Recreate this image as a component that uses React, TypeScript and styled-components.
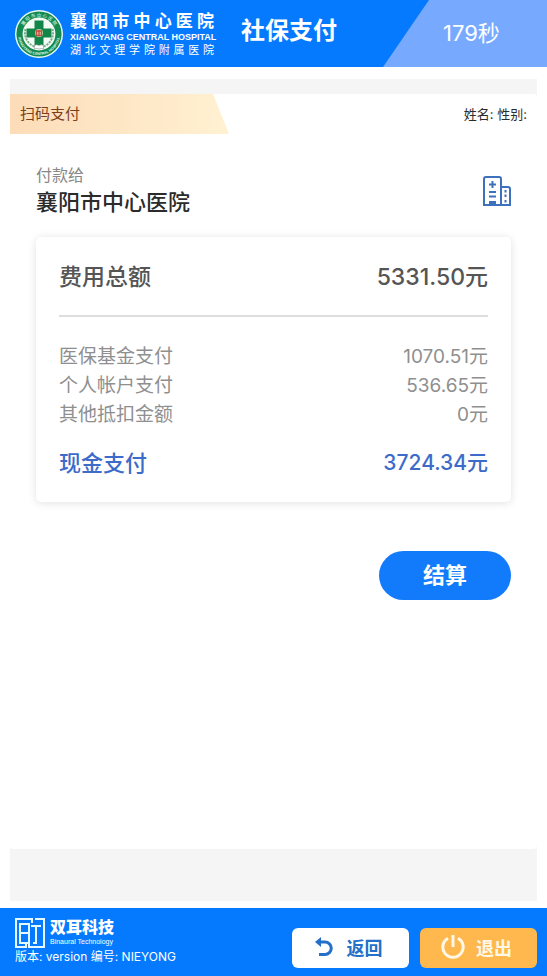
import React from 'react';
import styled, { createGlobalStyle } from 'styled-components';

const GlobalStyle = createGlobalStyle`
  *, *::before, *::after { box-sizing: border-box; }
  body {
    margin: 0;
    background: #fff;
    color: #2b2b2b;
    font-family: Inter, "Noto Sans CJK SC", sans-serif;
  }
  button { font-family: inherit; cursor: pointer; }
  h1, h2, p, dl, dd, dt { margin: 0; }
`;

const Page = styled.div`
  display: flex;
  flex-direction: column;
  min-height: 100vh;
`;

const Header = styled.header`
  display: flex;
  align-items: stretch;
  height: 67px;
  background: #057aff;
  color: #fff;
`;

const Brand = styled.div`
  display: flex;
  align-items: center;
  gap: 6px;
  padding-left: 14px;
`;

const BrandNames = styled.div`
  display: flex;
  flex-direction: column;
  width: 144px;
  padding-top: 2px;
  white-space: nowrap;
`;

const BrandLine = styled.span<{ $size: number; $line: number; $weight: number }>`
  font-size: ${(p) => p.$size}px;
  line-height: ${(p) => p.$line}px;
  font-weight: ${(p) => p.$weight};
  text-align: justify;
  text-align-last: justify;
`;

const BrandLatin = styled.span`
  font: 700 9px/12px "Liberation Sans", sans-serif;
`;

const Title = styled.h1`
  flex: 1;
  padding-left: 27px;
  font-size: 24px;
  line-height: 62px;
  font-weight: 700;
  white-space: nowrap;
`;

const Countdown = styled.div`
  width: 164px;
  padding-left: 60px;
  background: #77aaff;
  clip-path: polygon(46px 0, 100% 0, 100% 100%, 0 100%);
  font-size: 22px;
  line-height: 66px;
`;

const Main = styled.main`
  flex: 1;
  display: flex;
  flex-direction: column;
  margin: 12px 10px 7px;
  padding: 15px 0 52px;
  background: #f5f5f5;
`;

const Sheet = styled.section`
  flex: 1;
  display: flex;
  flex-direction: column;
  border-radius: 4px;
  background: #fff;
`;

const SheetTop = styled.div`
  display: flex;
  justify-content: space-between;
  height: 40px;
  padding-right: 10px;
  font-size: 13px;
  line-height: 40px;
`;

const Ribbon = styled.h2`
  width: 219px;
  padding-left: 10px;
  background: linear-gradient(90deg, #fddcb8, #fff1d2);
  clip-path: polygon(0 0, 203px 0, 100% 100%, 0 100%);
  color: #7c3f1c;
  font-size: 15px;
  line-height: 40px;
  font-weight: 400;
`;

const Content = styled.div`
  display: flex;
  flex-direction: column;
  padding: 29px 26px;
`;

const Payee = styled.div`
  display: flex;
  align-items: center;
  justify-content: space-between;
  margin-bottom: 19px;
`;

const PayeeLabel = styled.p`
  color: #888;
  font-size: 16px;
  line-height: 24px;
`;

const PayeeName = styled.p`
  font-size: 22px;
  line-height: 31px;
  font-weight: 500;
`;

const Card = styled.dl`
  padding: 17px 23px 20px;
  border-radius: 5px;
  background: #fff;
  box-shadow: 0 1px 8px rgba(0, 0, 0, 0.12);
`;

type Tone = 'total' | 'item' | 'cash';

const tones = {
  total: { color: '#555', size: 23, amount: 23, line: 46, weight: 500 },
  item: { color: '#8f8f8f', size: 19, amount: 19, line: 29, weight: 400 },
  cash: { color: '#3c6bc9', size: 22, amount: 21, line: 38, weight: 500 },
};

const Row = styled.div<{ $tone: Tone }>`
  display: flex;
  justify-content: space-between;
  color: ${(p) => tones[p.$tone].color};
  font-size: ${(p) => tones[p.$tone].size}px;
  line-height: ${(p) => tones[p.$tone].line}px;
  font-weight: ${(p) => tones[p.$tone].weight};

  dd {
    font-size: ${(p) => tones[p.$tone].amount}px;
  }
`;

const Items = styled.div`
  margin: 15px 0;
  padding-top: 25px;
  border-top: 2px solid #ddd;
`;

const SettleButton = styled.button`
  align-self: flex-end;
  width: 132px;
  height: 49px;
  margin-top: 49px;
  padding: 0 0 6px;
  border: 0;
  border-radius: 25px;
  background: #127bfb;
  color: #fff;
  font-size: 22px;
  font-weight: 700;
`;

const Footer = styled.footer`
  display: flex;
  justify-content: space-between;
  height: 68px;
  padding: 9px 10px 8px 15px;
  background: #057aff;
  color: #fff;
`;

const Vendor = styled.div`
  display: flex;
  align-items: center;
  gap: 5px;
  height: 31px;
`;

const VendorName = styled.p`
  font-size: 16px;
  line-height: 19px;
  font-weight: 900;
`;

const VendorLatin = styled.p`
  font: 400 7px/10px "Liberation Sans", sans-serif;
`;

const Version = styled.p`
  font-size: 12px;
  line-height: 18px;
`;

const Actions = styled.div`
  display: flex;
  align-items: flex-end;
  gap: 11px;
`;

const FooterButton = styled.button<{ $accent?: boolean }>`
  display: flex;
  align-items: center;
  justify-content: center;
  gap: ${(p) => (p.$accent ? 11 : 14)}px;
  width: 117px;
  height: 40px;
  padding: 0 4px 2px 0;
  border: 0;
  border-radius: 6px;
  background: ${(p) => (p.$accent ? '#ffb84d' : '#fff')};
  color: ${(p) => (p.$accent ? '#fff8e6' : '#2470c8')};
  font-size: 18px;
  font-weight: 700;
`;

const HospitalEmblem = () => (
  <svg width="50" height="50" viewBox="0 0 50 50" aria-hidden="true">
    <defs>
      <path id="arcTop" d="M7.5 25a17.5 17.5 0 0 1 35 0" />
      <path id="arcBottom" d="M4 25a21 21 0 0 0 42 0" />
    </defs>
    <circle cx="25" cy="25" r="24" fill="#eafbf4" />
    <circle cx="25" cy="25" r="22.6" fill="#138a50" />
    <circle cx="25" cy="25" r="16.4" fill="#f3fbf5" />
    <path d="M11.500 20c-2 8 2 15 10 18M38.500 20c2 8-2 15-10 18" fill="none" stroke="#7dab8f" strokeWidth="2" strokeDasharray="2.2 1" />
    <path d="M20.500 11.500h9v8h8v9h-8v8h-9v-8h-8v-9h8z" fill="#128549" />
    <circle cx="25" cy="24" r="4" fill="#c9cfae" />
    <path d="M22.500 22h5v4.300h-5zM25 20.800v6.700" fill="none" stroke="#c34b38" strokeWidth="1.300" />
    <path d="M20.500 36.500q2.200-1.500 4.500 0 2.200-1.500 4.500 0v3.500q-2.200-1.200-4.500 0-2.200-1.200-4.500 0z" fill="#fff" stroke="#87948a" strokeWidth=".6" />
    <text fill="#e6fff0" fontSize="4.500" fontFamily="Noto Sans CJK SC">
      <textPath href="#arcTop" startOffset="50%" textAnchor="middle">襄 阳 市 中 心 医 院</textPath>
    </text>
    <text fill="#e6fff0" fontSize="3.600" fontWeight="700" fontFamily="Liberation Sans">
      <textPath href="#arcBottom" startOffset="50%" textAnchor="middle">XIANGYANG CENTRAL HOSPITAL</textPath>
    </text>
  </svg>
);

const BuildingIcon = () => (
  <svg width="28" height="30" viewBox="0 0 28 30" fill="none" stroke="#3d70bd" strokeWidth="2" aria-hidden="true">
    <path d="M1 29V3q0-2 2-2h13q2 0 2 2v26M18 11h7q2 0 2 2v16M0 29h28" />
    <path d="M9.500 5v7M6 8.500h7M6 16h7M6 20.500h7" />
    <path d="M6 25h7v4H6z" fill="#3d70bd" stroke="none" />
    <path d="M22.500 14v2.500M22.500 18.500V21M22.500 24v2.500" />
  </svg>
);

const VendorLogo = () => (
  <svg width="30" height="30" viewBox="0 0 30 30" fill="none" stroke="#e5f7ff" strokeWidth="2" aria-hidden="true">
    <path d="M17 5V1H1v28h10v-3M20 1h9v28H14v-3" />
    <path d="M5 6h9v19H5zM5 15h9M16 8h10M21 8v17h-3" />
  </svg>
);

const BackIcon = () => (
  <svg width="18" height="20" viewBox="0 0 18 20" fill="none" stroke="#2470c8" strokeWidth="3" aria-hidden="true">
    <path d="M3 5h7a6 6 0 0 1 0 12.500H4" />
    <path d="M6 0v10L0 5z" fill="#2470c8" stroke="none" />
  </svg>
);

const PowerIcon = () => (
  <svg width="24" height="24" viewBox="0 0 24 24" fill="none" stroke="#fff8e6" strokeWidth="3" aria-hidden="true">
    <path d="M7 3.200a10.200 10.200 0 1 0 10 0M12 0v12" />
  </svg>
);

const items = [
  { label: '医保基金支付', amount: '1070.51元' },
  { label: '个人帐户支付', amount: '536.65元' },
  { label: '其他抵扣金额', amount: '0元' },
];

export default function App() {
  return (
    <Page lang="zh-CN">
      <GlobalStyle />
      <Header>
        <Brand>
          <HospitalEmblem />
          <BrandNames>
            <BrandLine $size={17} $line={19} $weight={700}>襄阳市中心医院</BrandLine>
            <BrandLatin>XIANGYANG CENTRAL HOSPITAL</BrandLatin>
            <BrandLine $size={11} $line={14} $weight={400}>湖北文理学院附属医院</BrandLine>
          </BrandNames>
        </Brand>
        <Title>社保支付</Title>
        <Countdown role="timer">179秒</Countdown>
      </Header>
      <Main>
        <Sheet>
          <SheetTop>
            <Ribbon>扫码支付</Ribbon>
            <span>姓名: 性别:</span>
          </SheetTop>
          <Content>
            <Payee>
              <div>
                <PayeeLabel>付款给</PayeeLabel>
                <PayeeName>襄阳市中心医院</PayeeName>
              </div>
              <BuildingIcon />
            </Payee>
            <Card>
              <Row $tone="total">
                <dt>费用总额</dt>
                <dd>5331.50元</dd>
              </Row>
              <Items>
                {items.map((item) => (
                  <Row $tone="item" key={item.label}>
                    <dt>{item.label}</dt>
                    <dd>{item.amount}</dd>
                  </Row>
                ))}
              </Items>
              <Row $tone="cash">
                <dt>现金支付</dt>
                <dd>3724.34元</dd>
              </Row>
            </Card>
            <SettleButton type="button">结算</SettleButton>
          </Content>
        </Sheet>
      </Main>
      <Footer>
        <div>
          <Vendor>
            <VendorLogo />
            <div>
              <VendorName>双耳科技</VendorName>
              <VendorLatin>Binaural Technology</VendorLatin>
            </div>
          </Vendor>
          <Version>版本: version 编号: NIEYONG</Version>
        </div>
        <Actions>
          <FooterButton type="button">
            <BackIcon />
            返回
          </FooterButton>
          <FooterButton type="button" $accent>
            <PowerIcon />
            退出
          </FooterButton>
        </Actions>
      </Footer>
    </Page>
  );
}
